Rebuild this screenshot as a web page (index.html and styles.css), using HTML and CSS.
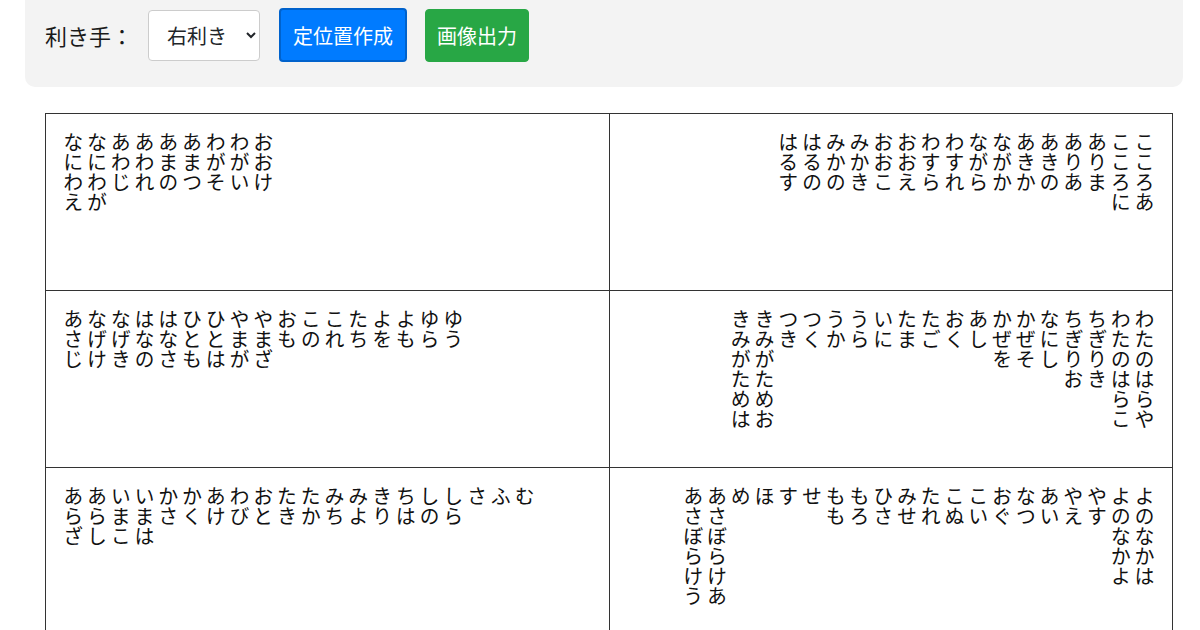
FILE: index.html
```html
<!DOCTYPE html>
<html lang="ja">
<head>
<meta charset="utf-8">
<title>定位置</title>
<link rel="stylesheet" href="styles.css">
</head>
<body>
<div class="toolbar">
  <span class="label">利き手：</span>
  <select class="hand">
    <option>右利き</option>
    <option>左利き</option>
  </select>
  <button class="btn btn-primary">定位置作成</button>
  <button class="btn btn-success">画像出力</button>
</div>

<table class="board">
  <tr>
    <td class="cell cell-left"><div class="words lr">なにわえ<br>なにわが<br>あわじ<br>あわれ<br>あまの<br>あまつ<br>わがそ<br>わがい<br>おおけ</div></td>
    <td class="cell cell-right"><div class="wrap"><div class="words rl">こころあ<br>こころに<br>ありま<br>ありあ<br>あきの<br>あきか<br>ながか<br>ながら<br>わすれ<br>わすら<br>おおえ<br>おおこ<br>みかき<br>みかの<br>はるの<br>はるす</div></div></td>
  </tr>
  <tr>
    <td class="cell cell-left"><div class="words lr">あさじ<br>なげけ<br>なげき<br>はなの<br>はなさ<br>ひとも<br>ひとは<br>やまが<br>やまざ<br>おも<br>この<br>これ<br>たち<br>よを<br>よも<br>ゆら<br>ゆう</div></td>
    <td class="cell cell-right"><div class="wrap"><div class="words rl">わたのはらや<br>わたのはらこ<br>ちぎりき<br>ちぎりお<br>なにし<br>かぜそ<br>かぜを<br>あし<br>おく<br>たご<br>たま<br>いに<br>うら<br>うか<br>つく<br>つき<br>きみがためお<br>きみがためは</div></div></td>
  </tr>
  <tr>
    <td class="cell cell-left"><div class="words lr">あらざ<br>あらし<br>いまこ<br>いまは<br>かさ<br>かく<br>あけ<br>わび<br>おと<br>たき<br>たか<br>みち<br>みよ<br>きり<br>ちは<br>しの<br>しら<br>さ<br>ふ<br>む</div></td>
    <td class="cell cell-right"><div class="wrap"><div class="words rl">よのなかは<br>よのなかよ<br>やす<br>やえ<br>あい<br>なつ<br>おぐ<br>こい<br>こぬ<br>たれ<br>みせ<br>ひさ<br>もろ<br>もも<br>せ<br>す<br>ほ<br>め<br>あさぼらけあ<br>あさぼらけう</div></div></td>
  </tr>
</table>
</body>
</html>
```

FILE: styles.css
```css
html, body {
  margin: 0;
  padding: 0;
  background: #ffffff;
}

body {
  font-family: "Noto Sans CJK JP", "Noto Sans", sans-serif;
  color: #212529;
}

.toolbar {
  display: flex;
  align-items: center;
  height: 87px;
  box-sizing: border-box;
  margin: 0 17px 0 25px;
  padding: 8px 20px 25px 20px;
  background: #f3f3f3;
  border-radius: 0 0 10px 10px;
}

.label {
  font-size: 22px;
  color: #1a1a1a;
  margin-right: 15px;
}

.hand {
  height: 51px;
  width: 112px;
  box-sizing: border-box;
  padding: 0 6px 0 14px;
  font-family: "Noto Sans CJK JP", sans-serif;
  font-size: 20px;
  color: #212529;
  background: #ffffff;
  border: 1px solid #cccccc;
  border-radius: 4px;
  margin-right: 19px;
}

.btn {
  font-family: "Noto Sans CJK JP", sans-serif;
  font-size: 20px;
  color: #ffffff;
  border-radius: 4px;
  padding: 0 12px;
  cursor: pointer;
}

.btn-primary {
  height: 54px;
  background: #007bff;
  border: 2px solid #0062cc;
  margin-right: 18px;
}

.btn-success {
  height: 53px;
  background: #28a745;
  border: 1px solid #28a745;
  padding: 0 11px;
}

.board {
  border-collapse: collapse;
  margin: 26px 0 0 45px;
  width: 1128px;
  table-layout: fixed;
}

.cell {
  width: 50%;
  height: 177px;
  box-sizing: border-box;
  border: 1px solid #333333;
  vertical-align: top;
  padding: 18px 16px 18px 15px;
}

.words {
  font-family: "Noto Sans CJK JP", sans-serif;
  font-size: 20px;
  line-height: 23.75px;
  color: #111111;
  white-space: nowrap;
}

.lr {
  writing-mode: vertical-lr;
}

.rl {
  writing-mode: vertical-rl;
}

.wrap {
  display: flex;
  justify-content: flex-end;
}
```
